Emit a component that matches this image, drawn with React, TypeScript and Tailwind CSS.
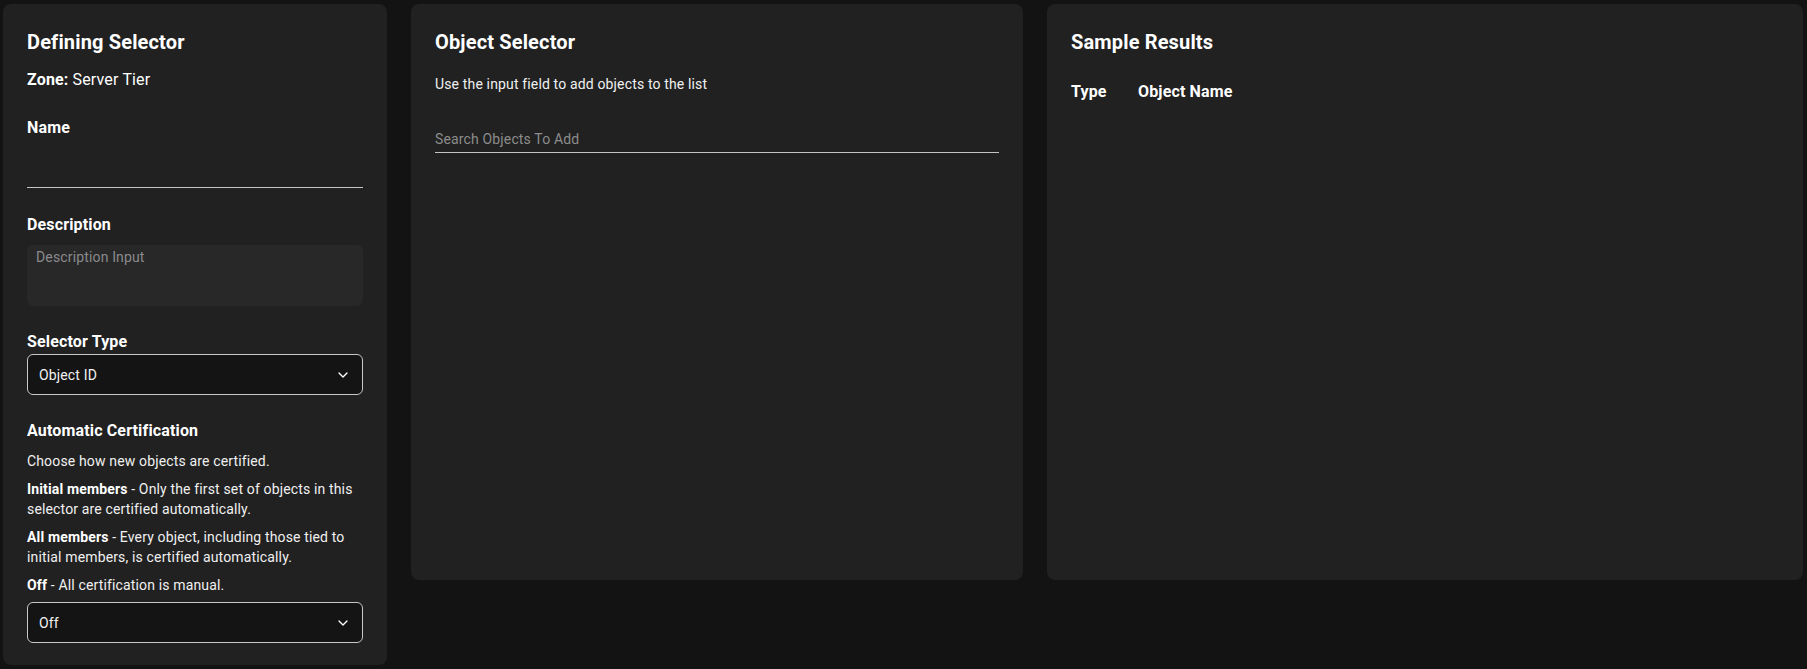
import React from "react";
import { ChevronDown } from "lucide-react";

function SelectBox({ value, className = "" }: { value: string; className?: string }) {
  return (
    <div className={`flex h-[41px] items-center justify-between rounded-md border border-[#c8c8c8] bg-[#141414] pl-[11px] pr-[11px] ${className}`}>
      <span className="text-sm leading-5 tracking-[0.15px] text-[#f2f2f2]">{value}</span>
      <ChevronDown size={16} strokeWidth={2} className="text-white" />
    </div>
  );
}

export default function App() {
  return (
    <div className="flex min-h-screen items-start gap-6 bg-[#131313] pb-1 pl-[3px] pr-1 pt-1 font-[family-name:Roboto,sans-serif] tracking-[0.15px] text-white">
      {/* Left panel */}
      <div className="flex w-[384px] shrink-0 flex-col rounded-lg bg-[#212121] px-6 pb-[22px] pt-6">
        <h2 className="text-xl font-bold leading-7">Defining Selector</h2>
        <div className="mt-3 text-base leading-6">
          <span className="font-bold">Zone:</span> Server Tier
        </div>

        <label className="mt-6 text-base font-bold leading-6">Name</label>
        <div className="h-[48px] border-b border-[#c4c4c4]"></div>

        <label className="mt-[25px] text-base font-bold leading-6">Description</label>
        <div className="mt-2 h-[61px] rounded-md bg-[#282828] px-[9px] pt-0">
          <span className="text-sm leading-5 text-[#8a8a8e]">Description Input</span>
        </div>

        <label className="mt-6 text-base font-bold leading-6">Selector Type</label>
        <SelectBox value="Object ID" />

        <label className="mt-6 text-base font-bold leading-6">Automatic Certification</label>
        <div className="mt-2 flex flex-col gap-2 text-sm leading-5 text-[#f0f0f0]">
          <p>Choose how new objects are certified.</p>
          <p>
            <span className="font-bold text-white">Initial members</span> - Only the first set of objects in this selector are certified automatically.
          </p>
          <p>
            <span className="font-bold text-white">All members</span> - Every object, including those tied to initial members, is certified automatically.
          </p>
          <p>
            <span className="font-bold text-white">Off</span> - All certification is manual.
          </p>
        </div>
        <SelectBox value="Off" className="mt-[7px]" />
      </div>

      {/* Middle panel */}
      <div className="flex h-[576px] w-[612px] shrink-0 flex-col rounded-lg bg-[#212121] px-6 pt-6">
        <h2 className="text-xl font-bold leading-7">Object Selector</h2>
        <p className="mt-[18px] text-sm leading-5 text-[#f0f0f0]">Use the input field to add objects to the list</p>
        <div className="mt-[33px] border-b border-[#c4c4c4] pb-[1px]">
          <span className="text-sm leading-5 text-[#8c8c8c]">Search Objects To Add</span>
        </div>
      </div>

      {/* Right panel */}
      <div className="flex h-[576px] flex-1 flex-col rounded-lg bg-[#212121] px-6 pt-6">
        <h2 className="text-xl font-bold leading-7">Sample Results</h2>
        <div className="mt-6 flex text-base font-bold leading-6">
          <span className="w-[67px]">Type</span>
          <span>Object Name</span>
        </div>
      </div>
    </div>
  );
}
